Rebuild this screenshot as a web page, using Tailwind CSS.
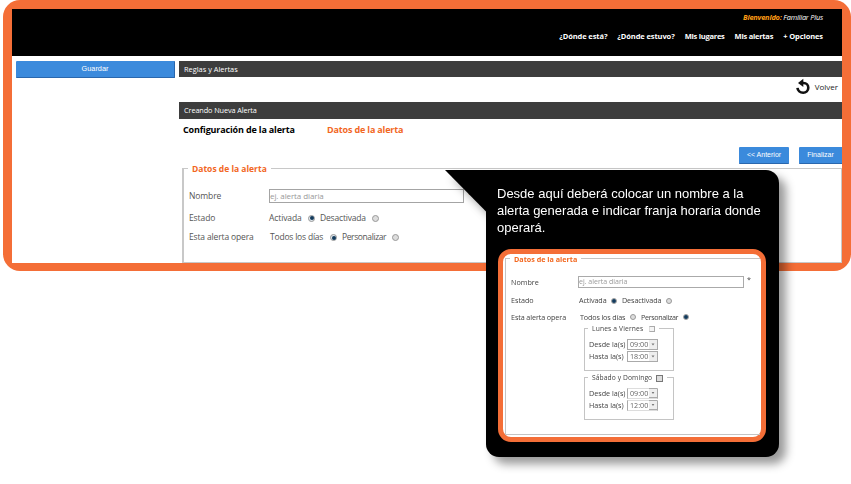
<!DOCTYPE html>
<html lang="es">
<head>
<meta charset="utf-8">
<title>Reglas y Alertas</title>
<script src="https://cdn.jsdelivr.net/npm/@tailwindcss/browser@4"></script>
</head>
<body class="relative h-[484px] w-[851px] overflow-hidden bg-white font-['Open_Sans','Noto_Sans',sans-serif] whitespace-nowrap">
<main class="ml-[3px] h-[271px] w-[848px] rounded-[17px] bg-[#f46e37] px-[9px] pt-[9px] pb-2">
  <div class="flex h-full flex-col overflow-hidden bg-white">
    <header class="flex h-[47px] shrink-0 flex-col items-end bg-black pr-[19px] text-white">
      <p class="h-4 text-[7.4px] leading-4 font-medium italic tracking-[-0.2px]"><span class="font-bold text-[#ff9d14]">Bienvenido:</span> Familiar Plus</p>
      <nav class="mt-[3px] flex gap-[10px] text-[7.5px] leading-4 font-bold tracking-[-0.1px]">
        <a>¿Dónde está?</a><a>¿Dónde estuvo?</a><a class="tracking-[-0.24px]">Mis lugares</a><a class="tracking-[-0.24px]">Mis alertas</a><a>+ Opciones</a>
      </nav>
    </header>
    <div class="flex flex-1 gap-1 pt-[5px] pl-1">
      <aside class="w-[159px]">
        <button class="block h-[17px] w-full rounded-[1px] border-r border-b border-[#2a67ad] bg-[#3b8adc] font-['Liberation_Sans',sans-serif] text-[7.3px] leading-4 text-white">Guardar</button>
      </aside>
      <section class="flex flex-1 flex-col">
        <h1 class="h-4 bg-[#3d3d3d] pl-[5px] text-[7.4px] leading-4 text-white">Reglas y Alertas</h1>
        <div class="flex h-[25px] items-center justify-end gap-1 pr-1 pb-[6px] text-[8px] text-[#222]">
          <svg class="h-[17px] w-4" viewBox="0 0 16 17" fill="none"><path d="M7 5H8.500C11.500 5 13.300 7 13.300 9.700C13.300 12.700 11 14.700 8.200 14.700C5 14.700 2.700 12.700 2.500 9.800" stroke="#111" stroke-width="2.600"/><path d="M3 4.900L8.300 .8V9Z" fill="#111"/></svg>
          <span>Volver</span>
        </div>
        <h2 class="h-[17px] bg-[#3d3d3d] pl-[5px] text-[7.3px] leading-[17px] tracking-[-0.1px] text-white">Creando Nueva Alerta</h2>
        <div class="flex h-7 gap-8 pl-1 text-[9px] leading-[21px] font-bold tracking-[-0.16px]">
          <span class="w-[112px]">Configuración de la alerta</span><span class="text-[#f2671f]">Datos de la alerta</span>
        </div>
        <div class="flex justify-end gap-[10px] font-['Liberation_Sans',sans-serif] text-[7px] leading-4 text-white">
          <button class="h-[17px] w-[50px] rounded-[1px] border-b border-[#2a67ad] bg-[#3b8adc]">&lt;&lt; Anterior</button>
          <button class="h-[17px] w-[43px] rounded-l-[1px] border-b border-[#2a67ad] bg-[#3b8adc]">Finalizar</button>
        </div>
        <div class="relative mt-1 ml-[3px] h-[95px] border border-l-2 border-[#c8c8c8] pl-[5px] text-[8.5px] tracking-[-0.1px] text-[#555]">
          <span class="absolute -top-[6px] left-1 h-3 bg-white px-1 text-[8.5px] leading-3 font-bold tracking-normal text-[#f2671f]">Datos de la alerta</span>
          <div class="mt-[19px] flex h-[15px] items-center"><span class="w-20 pt-[2px]">Nombre</span><span class="h-[14px] w-[195px] border border-[#a4a4a4] text-[8px] leading-3 text-[#999]">ej. alerta diaria</span><span class="ml-1">*</span></div>
          <div class="mt-[5px] flex h-5 items-center"><span class="w-20">Estado</span><span class="w-[39px]">Activada</span>
            <i class="flex size-[7px] items-center justify-center rounded-full border border-[#999] bg-[#dfe6ec]"><b class="size-[4px] rounded-full bg-[#123a5c]"></b></i>
            <span class="ml-[5px] w-[52px] tracking-[-0.18px]">Desactivada</span><i class="size-[7px] rounded-full border border-[#999] bg-[#ddd]"></i></div>
          <div class="flex h-[19px] items-center"><span class="w-20 tracking-[-0.15px]">Esta alerta opera</span><span class="w-[61px] pl-px tracking-[-0.2px]">Todos los días</span>
            <i class="flex size-[7px] items-center justify-center rounded-full border border-[#999] bg-[#dfe6ec]"><b class="size-[4px] rounded-full bg-[#123a5c]"></b></i>
            <span class="ml-[5px] w-[50px] tracking-[-0.4px]">Personalizar</span><i class="size-[7px] rounded-full border border-[#999] bg-[#ddd]"></i></div>
        </div>
      </section>
    </div>
  </div>
</main>

<div class="absolute top-[170px] left-[486px] h-[287px] w-[293px] drop-shadow-[7px_7px_5px_rgba(0,0,0,0.4)]">
  <svg class="absolute top-0 -left-[41px] h-[42px] w-[60px]" viewBox="0 0 60 42"><path d="M0 0H60V42H41.500Z" fill="#000"/></svg>
  <div class="relative h-full rounded-[13px] rounded-tl-none bg-black px-3 pt-[15px]">
    <p class="-ml-[1px] h-16 font-['Liberation_Sans',sans-serif] text-[13px] leading-[17px] text-white">Desde aquí deberá colocar un nombre a la<br>alerta generada e indicar franja horaria donde<br>operará.</p>
    <div class="h-[193px] w-[268px] rounded-[13px] border-[5px] border-[#f46e37] bg-white pt-1 pl-[2px]">
      <div class="relative h-[177px] w-[255px] border-b border-l border-t border-[#c4c4c4] pl-[5px] text-[7.2px] text-[#444]">
        <span class="absolute -top-[5px] left-1 h-[10px] bg-white px-1 text-[7.2px] leading-[10px] font-bold text-[#f2671f]">Datos de la alerta</span>
        <div class="mt-4 flex h-[13px] items-center"><span class="w-[67px] pt-px">Nombre</span><span class="h-3 w-[166px] border border-[#aaa] text-[7px] leading-[10px] text-[#999]">ej. alerta diaria</span><span class="-mt-1 ml-[3px]">*</span></div>
        <div class="mt-[5px] flex h-[15px] items-center"><span class="w-[68px]">Estado</span><span class="w-[32px] tracking-[-0.1px]">Activada</span>
          <i class="flex size-[6px] items-center justify-center rounded-full border border-[#999] bg-[#dfe6ec]"><b class="size-1 rounded-full bg-[#123a5c]"></b></i>
          <span class="ml-[5px] w-[44px] tracking-[-0.1px]">Desactivada</span><i class="size-[6px] rounded-full border border-[#999] bg-[#ddd]"></i></div>
        <div class="mt-px flex h-4 items-center"><span class="w-[69px] tracking-[-0.1px]">Esta alerta opera</span><span class="w-[50px] tracking-[-0.15px]">Todos los días</span>
          <i class="size-[6px] rounded-full border border-[#999] bg-[#ddd]"></i>
          <span class="ml-[5px] w-[42px] tracking-[-0.35px]">Personalizar</span><i class="flex size-[6px] items-center justify-center rounded-full border border-[#999] bg-[#dfe6ec]"><b class="size-1 rounded-full bg-[#123a5c]"></b></i></div>
        <div class="relative mt-[3px] ml-[73px] h-[43px] w-[90px] border border-[#c4c4c4] pt-[9px] pl-1">
          <span class="absolute -top-[5px] left-[3px] flex h-[10px] items-center gap-[6px] bg-white px-1 text-[6.7px] leading-[10px] tracking-[0.15px]">Lunes a Viernes <i class="size-[6px] border border-[#aaa] border-l-[#ddd] bg-[#f4f4f4]"></i></span>
          <div class="flex h-3 items-center"><span class="w-[38px]">Desde la(s)</span><span class="flex h-[11px] w-[31px] items-center justify-between border border-[#aaa] pl-[2px] text-[#666]">09:00<svg class="h-[9px] w-2 bg-[#eee]" viewBox="0 0 8 9"><path d="M2.500 3.500H5.500L4 5.500Z" fill="#777"/></svg></span></div>
          <div class="flex h-3 items-center"><span class="w-[38px]">Hasta la(s)</span><span class="flex h-[11px] w-[31px] items-center justify-between border border-[#aaa] pl-[2px] text-[#666]">18:00<svg class="h-[9px] w-2 bg-[#eee]" viewBox="0 0 8 9"><path d="M2.500 3.500H5.500L4 5.500Z" fill="#777"/></svg></span></div>
        </div>
        <div class="relative mt-[6px] ml-[73px] h-[43px] w-[90px] border border-[#c4c4c4] pt-[9px] pl-1">
          <span class="absolute -top-[5px] left-[3px] flex h-[10px] items-center gap-1 bg-white px-1 text-[6.7px] leading-[10px] tracking-[0.1px]">Sábado y Domingo <i class="size-[7px] border border-[#777] bg-[#ddd]"></i></span>
          <div class="flex h-3 items-center"><span class="w-[38px]">Desde la(s)</span><span class="flex h-[11px] w-[31px] items-center justify-between border border-[#aaa] border-y-[#ddd] pl-[2px] text-[#666]">09:00<svg class="h-[10px] w-2 border-y border-[#aaa] bg-[#eee]" viewBox="0 0 8 9"><path d="M2.500 3.500H5.500L4 5.500Z" fill="#777"/></svg></span></div>
          <div class="flex h-3 items-center"><span class="w-[38px]">Hasta la(s)</span><span class="flex h-[11px] w-[31px] items-center justify-between border border-[#aaa] border-y-[#ddd] pl-[2px] text-[#666]">12:00<svg class="h-[10px] w-2 border-y border-[#aaa] bg-[#eee]" viewBox="0 0 8 9"><path d="M2.500 3.500H5.500L4 5.500Z" fill="#777"/></svg></span></div>
        </div>
      </div>
    </div>
  </div>
</div>
</body>
</html>
